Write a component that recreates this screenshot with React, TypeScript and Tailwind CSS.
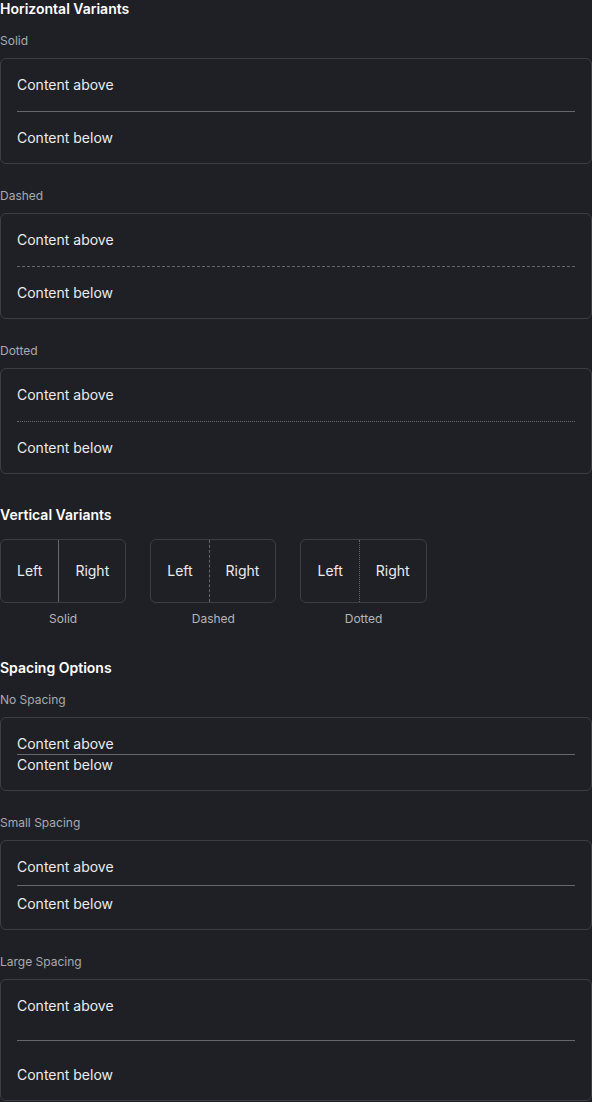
import React from "react";

const font = { fontFamily: "Inter, 'Noto Sans', sans-serif" };

function HBox({ variant, gap }: { variant: "solid" | "dashed" | "dotted"; gap: string }) {
  const styleCls =
    variant === "solid" ? "border-solid" : variant === "dashed" ? "border-dashed" : "border-dotted";
  return (
    <div className="rounded-md border border-[#3d3e44] bg-[#1f2025] p-4">
      <div className="text-sm leading-[19.5px] text-[#ececee]">Content above</div>
      <div className={`border-t border-[#66676c] ${styleCls} ${gap}`} />
      <div className="text-sm leading-[19.5px] text-[#ececee]">Content below</div>
    </div>
  );
}

function VBox({ variant, label }: { variant: "solid" | "dashed" | "dotted"; label: string }) {
  const styleCls =
    variant === "solid" ? "border-solid" : variant === "dashed" ? "border-dashed" : "border-dotted";
  return (
    <div className="flex flex-col items-center">
      <div className="flex h-16 items-stretch rounded-md border border-[#3d3e44]">
        <div className="flex items-center px-4 text-sm text-[#ececee]">Left</div>
        <div className={`border-l border-[#66676c] ${styleCls}`} />
        <div className="flex items-center px-4 text-sm text-[#ececee]">Right</div>
      </div>
      <div className="mt-2 text-xs leading-4 text-[#b4b5ba]">{label}</div>
    </div>
  );
}

function Label({ children }: { children: React.ReactNode }) {
  return <div className="mb-[9px] text-xs leading-4 text-[#a9aaaf]">{children}</div>;
}

export default function App() {
  return (
    <div className="min-h-[1102px] w-[592px] bg-[#1f2025] text-white" style={font}>
      <div className="flex flex-col gap-8">
        <section>
          <h3 className="mb-4 text-sm font-semibold leading-[17px] text-white">Horizontal Variants</h3>
          <div className="flex flex-col gap-6">
            <div>
              <Label>Solid</Label>
              <HBox variant="solid" gap="my-4" />
            </div>
            <div>
              <Label>Dashed</Label>
              <HBox variant="dashed" gap="my-4" />
            </div>
            <div>
              <Label>Dotted</Label>
              <HBox variant="dotted" gap="my-4" />
            </div>
          </div>
        </section>
        <section>
          <h3 className="mb-4 text-sm font-semibold leading-[17px] text-white">Vertical Variants</h3>
          <div className="flex gap-6">
            <VBox variant="solid" label="Solid" />
            <VBox variant="dashed" label="Dashed" />
            <VBox variant="dotted" label="Dotted" />
          </div>
        </section>
        <section>
          <h3 className="mb-4 text-sm font-semibold leading-[17px] text-white">Spacing Options</h3>
          <div className="flex flex-col gap-6">
            <div>
              <Label>No Spacing</Label>
              <HBox variant="solid" gap="my-0" />
            </div>
            <div>
              <Label>Small Spacing</Label>
              <HBox variant="solid" gap="my-2" />
            </div>
            <div>
              <Label>Large Spacing</Label>
              <HBox variant="solid" gap="my-6" />
            </div>
          </div>
        </section>
      </div>
    </div>
  );
}
